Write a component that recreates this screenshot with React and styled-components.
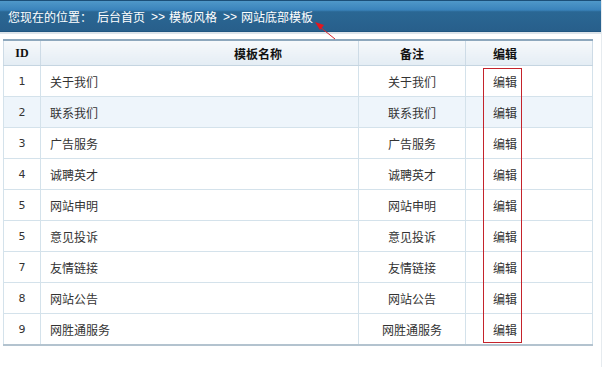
import React from "react";
import styled, { createGlobalStyle } from "styled-components";

const GlobalStyle = createGlobalStyle`
  html, body {
    margin: 0;
    padding: 0;
    background: #fff;
    font-family: "Liberation Sans", "Noto Sans CJK SC", sans-serif;
    font-size: 12px;
    color: #333;
  }
`;

const rows = [
  { id: 1, name: "关于我们", note: "关于我们" },
  { id: 2, name: "联系我们", note: "联系我们" },
  { id: 3, name: "广告服务", note: "广告服务" },
  { id: 4, name: "诚聘英才", note: "诚聘英才" },
  { id: 5, name: "网站申明", note: "网站申明" },
  { id: 5, name: "意见投诉", note: "意见投诉" },
  { id: 7, name: "友情链接", note: "友情链接" },
  { id: 8, name: "网站公告", note: "网站公告" },
  { id: 9, name: "网胜通服务", note: "网胜通服务" },
];

const Page = styled.div`
  position: relative;
  width: 601px;
  height: 367px;
  border-right: 1px solid #e6ebef;
`;

const TopBar = styled.div`
  height: 29px;
  display: flex;
  align-items: center;
  padding-left: 8px;
  padding-top: 1px;
  color: #fff;
  font-size: 12px;
  border-top: 1px solid #1c4f78;
  border-bottom: 1px solid #1f5580;
  background: linear-gradient(
    to bottom,
    #4f98c9 0%,
    #3a83bb 30%,
    #2a6794 36%,
    #285f8b 100%
  );
`;

const Crumb = styled.span`
  margin-right: ${(p) => p.$gap || 0}px;
`;

const Sep = styled.span`
  font-family: "Liberation Sans", sans-serif;
  margin: 0 4px 0 6px;
`;

const Strip = styled.div`
  height: 2px;
  background: #dde4ea;
`;

const Content = styled.div`
  padding: 5px 0 0 3px;
`;

const Table = styled.table`
  width: 589px;
  border-collapse: collapse;
  table-layout: fixed;
  border: 1px solid #a7b9c7;
  border-top: 2px solid #8ea8bd;
  border-bottom: 2px solid #b3c3cf;
`;

const Th = styled.th`
  height: 24px;
  padding: 0 0 0 ${(p) => p.$pad || 0}px;
  font-size: 12px;
  font-weight: bold;
  color: #111;
  text-align: ${(p) => p.$align || "center"};
  background: linear-gradient(to bottom, #f6f9fb, #e4edf4);
  border: 1px solid #cddbe6;
  border-bottom: 1px solid #c5d5e1;
  font-family: ${(p) =>
    p.$serif ? '"Liberation Serif", serif' : '"Noto Sans CJK SC", sans-serif'};
`;

const Tr = styled.tr`
  background: ${(p) => (p.$hl ? "#eef5fb" : "#fff")};
`;

const Td = styled.td`
  height: 30px;
  padding: 0 0 0 ${(p) => p.$pad || 0}px;
  text-align: ${(p) => p.$align || "center"};
  border: 1px solid #d4e2eb;
  color: #333;
  font-family: ${(p) =>
    p.$num ? '"DejaVu Sans", sans-serif' : '"Noto Sans CJK SC", sans-serif'};
  font-size: ${(p) => (p.$num ? "11px" : "12px")};
`;

const RedBox = styled.div`
  position: absolute;
  left: 483px;
  top: 68px;
  width: 37px;
  height: 273px;
  border: 1px solid #c4232b;
  pointer-events: none;
`;

const Arrow = styled.svg`
  position: absolute;
  left: 310px;
  top: 18px;
`;

export default function App() {
  return (
    <>
      <GlobalStyle />
      <Page>
        <TopBar>
          <Crumb $gap={5}>您现在的位置：</Crumb>
          <Crumb>后台首页</Crumb>
          <Sep>&gt;&gt;</Sep>
          <Crumb>模板风格</Crumb>
          <Sep>&gt;&gt;</Sep>
          <Crumb>网站底部模板</Crumb>
        </TopBar>
        <Strip />
        <Content>
          <Table>
            <colgroup>
              <col style={{ width: 37 }} />
              <col style={{ width: 318 }} />
              <col style={{ width: 107 }} />
              <col style={{ width: 127 }} />
            </colgroup>
            <thead>
              <tr>
                <Th $serif>ID</Th>
                <Th $align="left" $pad={193}>
                  模板名称
                </Th>
                <Th>备注</Th>
                <Th $align="left" $pad={27}>
                  编辑
                </Th>
              </tr>
            </thead>
            <tbody>
              {rows.map((r, i) => (
                <Tr key={i} $hl={i === 1}>
                  <Td $num>{r.id}</Td>
                  <Td $align="left" $pad={9}>
                    {r.name}
                  </Td>
                  <Td>{r.note}</Td>
                  <Td $align="left" $pad={27}>
                    编辑
                  </Td>
                </Tr>
              ))}
            </tbody>
          </Table>
        </Content>
        <RedBox />
        <Arrow width="30" height="24" viewBox="0 0 30 24">
          <line x1="25" y1="21" x2="10" y2="9" stroke="#d9232b" strokeWidth="1" />
          <polygon points="5,4 14,7 10,12" fill="#e4161e" />
        </Arrow>
      </Page>
    </>
  );
}
